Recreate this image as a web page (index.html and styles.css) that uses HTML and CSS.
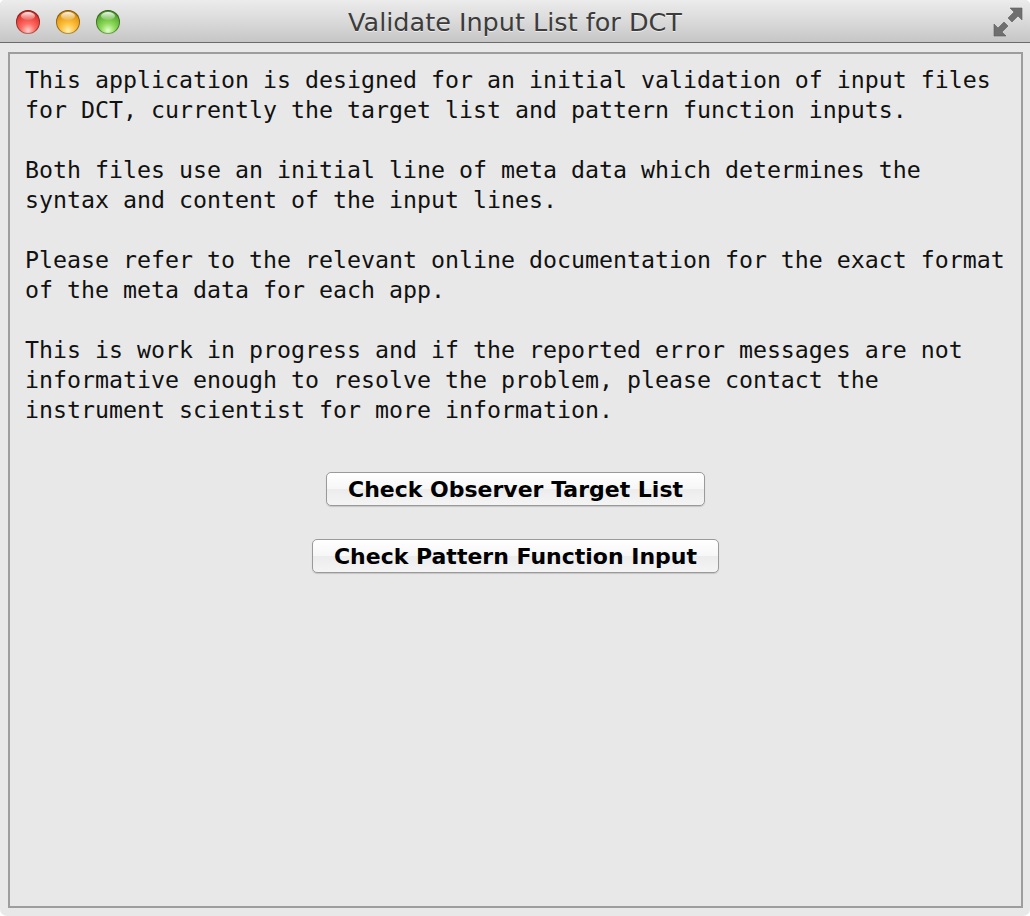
FILE: index.html
```html
<!DOCTYPE html>
<html>
<head>
<meta charset="utf-8">
<link rel="stylesheet" href="styles.css">
</head>
<body>
<div class="window">
  <div class="titlebar">
    <div class="lights">
      <span class="light red"></span>
      <span class="light yellow"></span>
      <span class="light green"></span>
    </div>
    <div class="title">Validate Input List for DCT</div>
    <svg class="fullscreen" width="30" height="30" viewBox="0 0 30 30">
      <polygon points="29,1 29,13 25,9 19,15 15,11 21,5 17,1" fill="#6f6f6f" stroke="#5c5c5c" stroke-width="0.6" stroke-linejoin="round"/>
      <polygon points="1,29 1,17 5,21 11,15 15,19 9,25 13,29" fill="#6f6f6f" stroke="#5c5c5c" stroke-width="0.6" stroke-linejoin="round"/>
    </svg>
  </div>
  <div class="content">
    <div class="panel">
      <div class="text">
        <p>This application is designed for an initial validation of input files<br>for DCT, currently the target list and pattern function inputs.</p>
        <p>Both files use an initial line of meta data which determines the<br>syntax and content of the input lines.</p>
        <p>Please refer to the relevant online documentation for the exact format<br>of the meta data for each app.</p>
        <p>This is work in progress and if the reported error messages are not<br>informative enough to resolve the problem, please contact the<br>instrument scientist for more information.</p>
      </div>
      <div class="buttons">
        <button class="btn">Check Observer Target List</button>
        <button class="btn">Check Pattern Function Input</button>
      </div>
    </div>
  </div>
</div>
</body>
</html>
```

FILE: styles.css
```css
html, body {
  margin: 0;
  padding: 0;
  background: #ffffff;
}

.window {
  width: 1030px;
  height: 916px;
  display: flex;
  flex-direction: column;
  border-radius: 5px 5px 7px 7px;
  overflow: hidden;
  background: #e8e8e8;
}

.titlebar {
  height: 42px;
  flex: none;
  border-bottom: 1px solid #6b6b6b;
  background: linear-gradient(to bottom, #ececec 0%, #dadada 50%, #c6c6c6 100%);
  display: flex;
  align-items: center;
  position: relative;
}

.lights {
  display: flex;
  gap: 16px;
  padding-left: 16px;
  padding-top: 1px;
  width: 120px;
}

.light {
  width: 24px;
  height: 24px;
  border-radius: 50%;
  box-sizing: border-box;
  box-shadow: inset 0 0 0 1px rgba(0,0,0,0.35);
}

.red {
  background: radial-gradient(circle at 50% 85%, #ffd0cc 0%, #ff6b63 30%, #e23b34 65%, #b0201c 100%);
}
.red::before, .yellow::before, .green::before {
  content: "";
  display: block;
  width: 14px;
  height: 8px;
  margin: 2px auto 0;
  border-radius: 50%;
  background: linear-gradient(to bottom, rgba(255,255,255,0.9), rgba(255,255,255,0.1));
}
.yellow {
  background: radial-gradient(circle at 50% 85%, #fff0b0 0%, #ffc240 30%, #e29a17 65%, #a86c0c 100%);
}
.green {
  background: radial-gradient(circle at 50% 85%, #e0ffc8 0%, #8fdb5c 30%, #5cae34 65%, #357a1b 100%);
}

.title {
  position: absolute;
  left: 0;
  right: 0;
  top: 0;
  height: 42px;
  line-height: 44px;
  text-align: center;
  font-family: "DejaVu Sans", sans-serif;
  font-size: 25.5px;
  color: #3c3c3c;
  text-shadow: 0 1px 0 rgba(255,255,255,0.6);
  pointer-events: none;
}

.fullscreen {
  position: absolute;
  right: 7px;
  top: 7px;
}

.content {
  flex: 1;
  display: flex;
  padding: 9px 7px 8px 8px;
}

.panel {
  flex: 1;
  border: 2px solid #9d9d9d;
  padding: 11px 10px 0 15px;
}

.text {
  font-family: "DejaVu Sans Mono", "Liberation Mono", monospace;
  font-size: 23.25px;
  line-height: 30px;
  color: #111111;
}

.text p {
  margin: 0 0 30px 0;
}

.text p:last-child {
  margin-bottom: 0;
}

.buttons {
  display: flex;
  flex-direction: column;
  align-items: center;
  gap: 33px;
  margin-top: 47px;
  padding-right: 5px;
}

.btn {
  height: 34px;
  padding: 0 21px;
  font-family: "DejaVu Sans", sans-serif;
  font-weight: bold;
  font-size: 22px;
  color: #000;
  border: 1px solid #9a9a9a;
  border-radius: 5px;
  background: linear-gradient(to bottom, #ffffff 0%, #f7f7f7 50%, #ececec 51%, #f4f4f4 100%);
  box-shadow: 0 1px 1px rgba(0,0,0,0.15);
}
```
